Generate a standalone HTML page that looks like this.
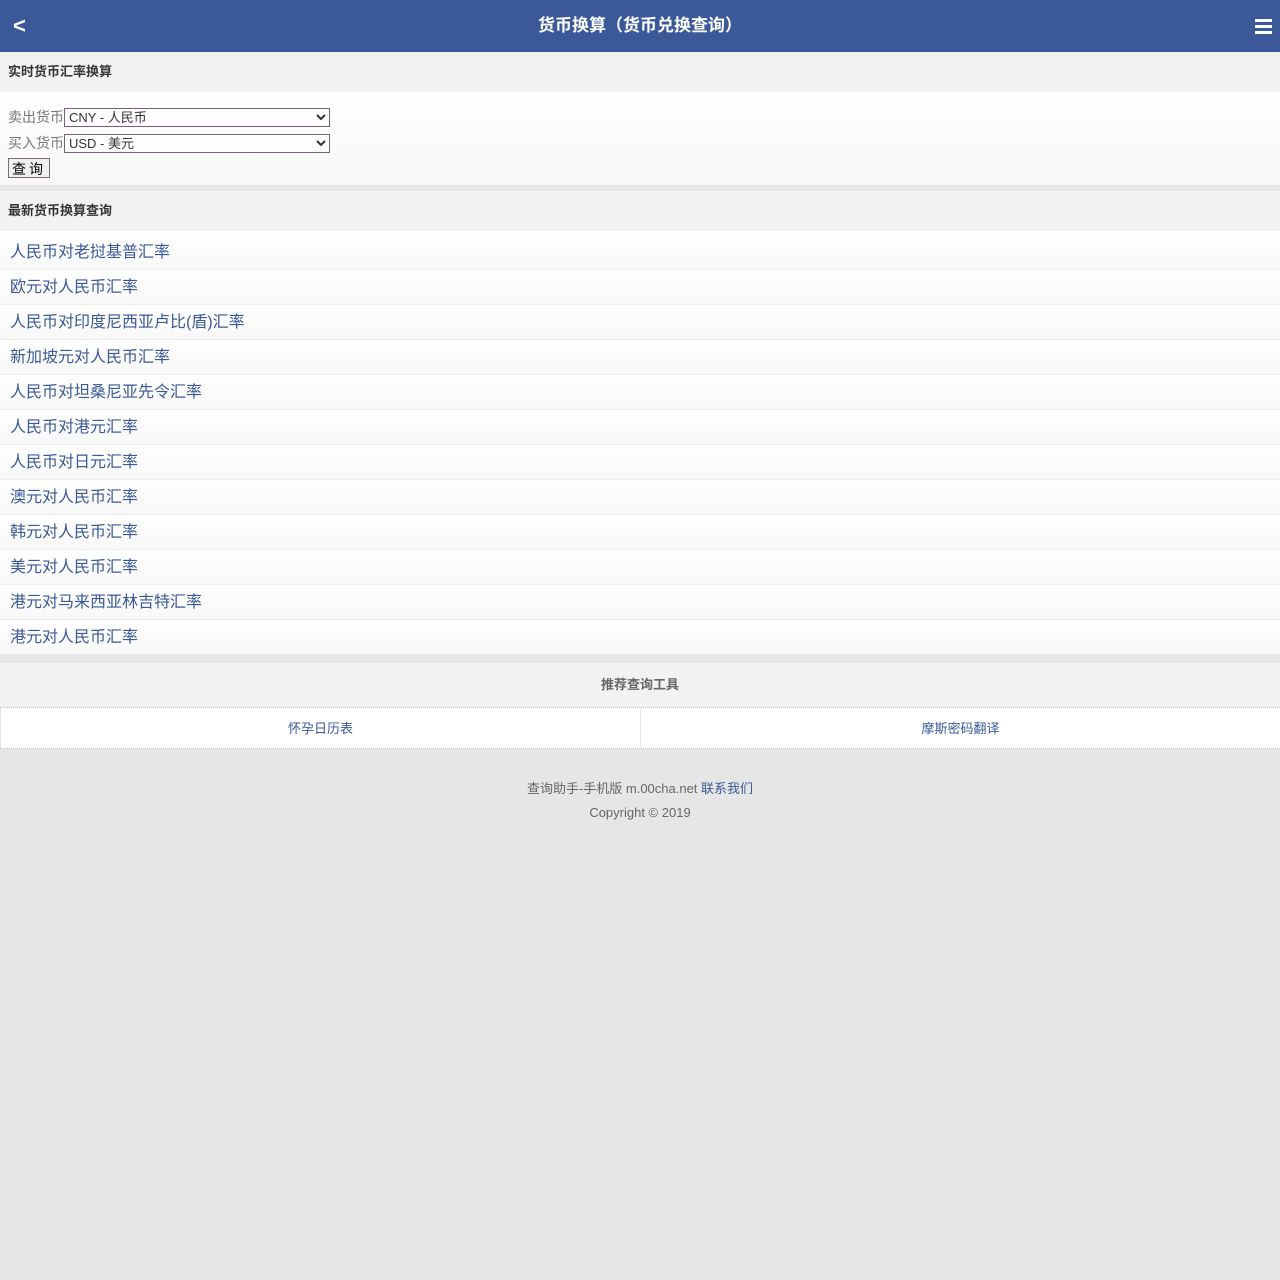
<!DOCTYPE html>
<html><head><meta charset="utf-8"><style>
*{margin:0;padding:0;box-sizing:border-box}
body{width:1280px;height:1280px;background:#e6e6e6;font-family:"Liberation Sans","Noto Sans CJK SC",sans-serif;color:#333;overflow:hidden}
.hd{height:52px;background:#3b5998;color:#fff;position:relative;text-align:center;font-size:17px;font-weight:bold;line-height:52px}
.hd .b{position:absolute;left:13px;top:0;font-size:22px}
.hd .m{position:absolute;right:8px;top:19px;width:17px}
.hd .m i{display:block;height:3px;background:#fff;margin-bottom:3px}
.st{height:40px;background:#f2f2f2;font-size:13px;font-weight:bold;line-height:40px;padding-left:8px}
.fm{height:93px;background:linear-gradient(#fff,#f7f7f7);padding:16px 8px 0;font-size:14px;color:#777}
.fm div{height:26px;line-height:18px}
select{width:266px;height:19px;font-size:13px;border:1px solid #7a5f7a;background:#fff;vertical-align:top;font-family:inherit;color:#333}
button{border:1px solid #7a6a7a;background:#f0f0f0;font-size:14px;height:20px;width:42px;padding:0;font-family:inherit;letter-spacing:3px;margin-top:-2px}
.gap{height:6px;background:#e6e6e6}
.ls{background:#fff;padding-top:4px}
.ls a{display:block;height:35px;line-height:36px;padding-left:10px;font-size:16px;color:#3b5998;text-decoration:none;border-bottom:1px solid #eee;background:linear-gradient(#fff,#f8f8f8)}
.rt{height:44px;background:#f2f2f2;text-align:center;line-height:44px;font-size:13px;font-weight:bold;color:#666}
.gr{display:flex;height:42px;border-top:1px dotted #cbb;border-bottom:1px dotted #cbb;background:#fff}
.gr a{flex:1;text-align:center;line-height:42px;font-size:13px;color:#3b5998;text-decoration:none;border-left:1px solid #e6e6e6}
.ft{text-align:center;font-size:13px;color:#666;padding-top:28px;line-height:24px}
</style></head><body>
<div class="hd"><span class="b">&lt;</span>货币换算（货币兑换查询）<span class="m"><i></i><i></i><i></i></span></div>
<div class="st">实时货币汇率换算</div>
<div class="fm"><div>卖出货币<select><option>CNY - 人民币</option></select></div><div>买入货币<select><option>USD - 美元</option></select></div><button>查询</button></div>
<div class="gap"></div>
<div class="st">最新货币换算查询</div>
<div class="ls">
<a>人民币对老挝基普汇率</a><a>欧元对人民币汇率</a><a>人民币对印度尼西亚卢比(盾)汇率</a><a>新加坡元对人民币汇率</a><a>人民币对坦桑尼亚先令汇率</a><a>人民币对港元汇率</a><a>人民币对日元汇率</a><a>澳元对人民币汇率</a><a>韩元对人民币汇率</a><a>美元对人民币汇率</a><a>港元对马来西亚林吉特汇率</a><a>港元对人民币汇率</a>
</div>
<div style="height:8px"></div>
<div class="rt">推荐查询工具</div>
<div class="gr"><a>怀孕日历表</a><a>摩斯密码翻译</a></div>
<div class="ft">查询助手-手机版 m.00cha.net <span style="color:#3b5998">联系我们</span><br>Copyright © 2019</div>
</body></html>
